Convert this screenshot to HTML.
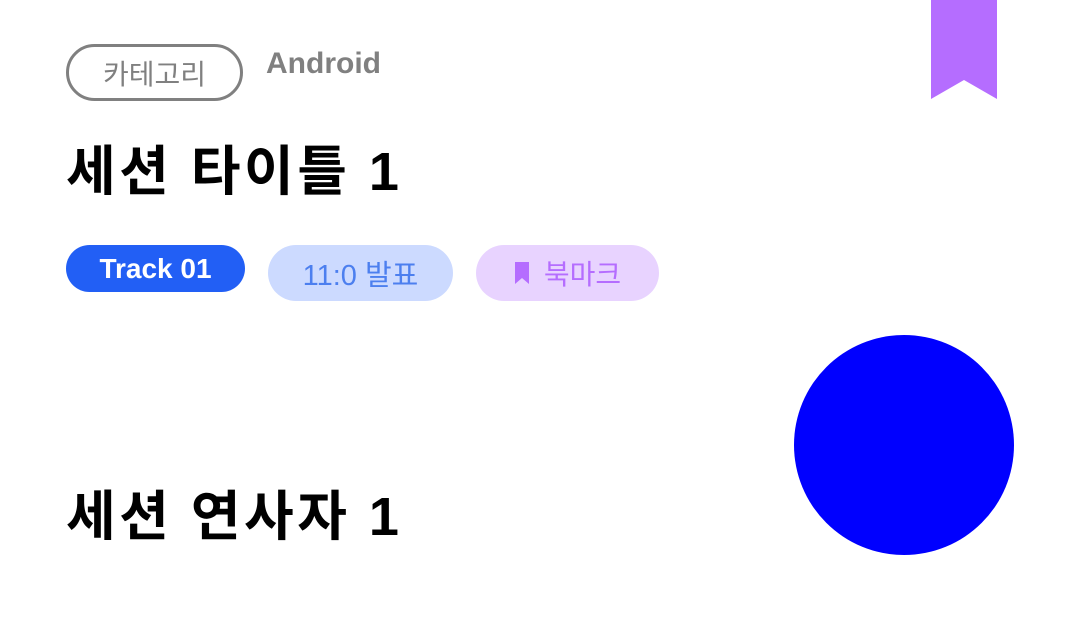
<!DOCTYPE html><html><head><meta charset="utf-8"><style>
body{margin:0;width:1080px;height:621px;background:#fff;position:relative;overflow:hidden;font-family:"Liberation Sans","Noto Sans CJK KR",sans-serif}
.a{position:absolute}
.chip{position:absolute;box-sizing:border-box;border-radius:30px;display:flex;align-items:center;justify-content:center}
</style></head><body>
<div class="chip" style="left:66px;top:44px;width:177px;height:57px;border:3px solid #808080;color:#808080;font-size:28px">카테고리</div>
<div class="a" style="left:266px;top:44px;font-size:30px;color:#808080;font-weight:bold;line-height:40px">Android</div>
<div class="a" style="left:66px;top:137px;font-size:54px;font-weight:bold;line-height:70px;color:#000;letter-spacing:3.5px">세션 타이틀 1</div>
<div class="chip" style="left:66px;top:245px;width:179px;height:47px;background:#225ff5;color:#fff;font-size:28px;font-weight:bold">Track 01</div>
<div class="chip" style="left:268px;top:245px;width:185px;height:56px;background:#ccdaff;color:#4c7fef;font-size:29px">11:0 발표</div>
<div class="chip" style="left:476px;top:245px;width:183px;height:56px;background:#e8d3ff;color:#b56dff;font-size:28px"><svg width="16" height="22" viewBox="0 0 16 22" style="margin-right:14px"><path d="M1 0H15V22L8 16L1 22Z" fill="#b56dff"/></svg>북마크</div>
<div class="a" style="left:66px;top:482px;font-size:54px;font-weight:bold;line-height:70px;color:#000;letter-spacing:3.5px">세션 연사자 1</div>
<svg class="a" style="left:931px;top:0" width="66" height="100"><path d="M0 0H66V99L33 80L0 99Z" fill="#b56dff"/></svg>
<div class="a" style="left:794px;top:335px;width:220px;height:220px;border-radius:50%;background:#0000ff"></div>
</body></html>
